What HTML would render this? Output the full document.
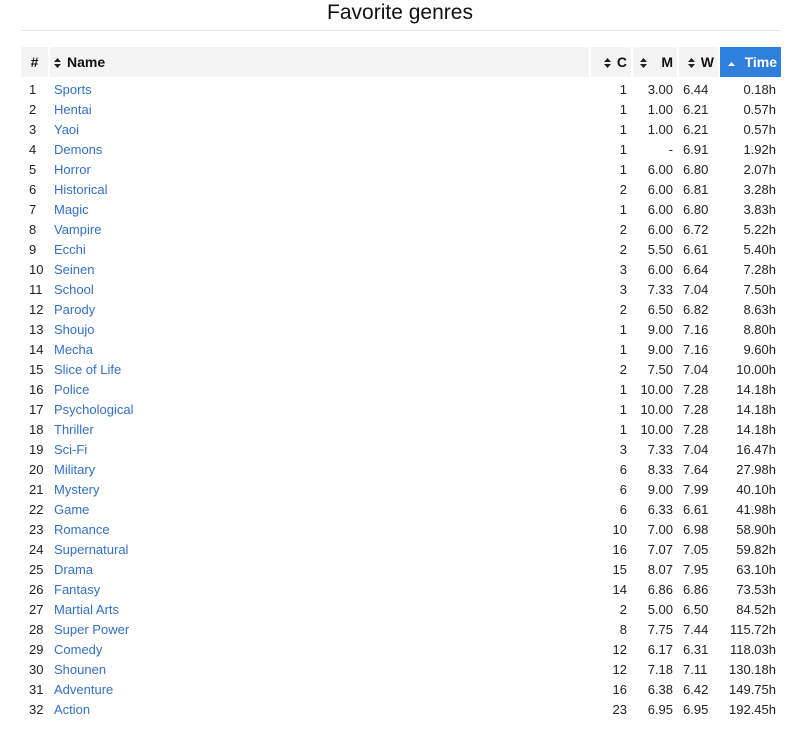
<!DOCTYPE html>
<html><head><meta charset="utf-8"><style>
body{margin:0;background:#fff;font-family:"Liberation Sans",sans-serif;color:#222;}
h1{position:absolute;top:0;left:0;width:800px;margin:0;text-align:center;font-weight:normal;font-size:21px;line-height:26px;color:#111}
.hr{position:absolute;top:30px;left:21px;width:760px;height:1px;background:#e8e8e8}
table{position:absolute;top:47px;left:21px;border-collapse:collapse;table-layout:fixed;width:760px;font-size:13px}
th{background:#f4f4f4;height:30px;padding:0 4px;font-weight:bold;font-size:14px;color:#111;border-left:2px solid #fff;white-space:nowrap}
th:first-child{border-left:0}
th.s{background:#2f80dd;color:#fff}
svg.a{vertical-align:-1px;margin-right:6px}
td{height:20px;padding:0 5px;white-space:nowrap}
td:nth-child(1){padding-left:8px}
td:nth-child(2){color:#3470c8}
td.r{text-align:right}
tr:first-child td{padding-top:2px}
</style></head><body>
<h1>Favorite genres</h1><div class="hr"></div>
<table>
<colgroup><col style="width:28px"><col style="width:541px"><col style="width:42px"><col style="width:46px"><col style="width:41px"><col style="width:62px"></colgroup>
<thead><tr><th style="text-align:center">#</th><th style="text-align:left"><svg class="a" width="7" height="10"><path d="M0 4L3.5 0 7 4Z M0 6L3.5 10 7 6Z" fill="#222"/></svg>Name</th><th style="text-align:right"><svg class="a" width="7" height="10"><path d="M0 4L3.5 0 7 4Z M0 6L3.5 10 7 6Z" fill="#222"/></svg>C</th><th style="text-align:right"><svg class="a" style="margin-right:14px" width="7" height="10"><path d="M0 4L3.5 0 7 4Z M0 6L3.5 10 7 6Z" fill="#222"/></svg>M</th><th style="text-align:right"><svg class="a" width="7" height="10"><path d="M0 4L3.5 0 7 4Z M0 6L3.5 10 7 6Z" fill="#222"/></svg>W</th><th class="s" style="text-align:right"><svg class="a" style="margin-right:10px;vertical-align:1px" width="7" height="4"><path d="M0 4L3.5 0 7 4Z" fill="#fff"/></svg>Time</th></tr></thead>
<tbody>
<tr><td>1</td><td>Sports</td><td class="r">1</td><td class="r">3.00</td><td>6.44</td><td class="r">0.18h</td></tr>
<tr><td>2</td><td>Hentai</td><td class="r">1</td><td class="r">1.00</td><td>6.21</td><td class="r">0.57h</td></tr>
<tr><td>3</td><td>Yaoi</td><td class="r">1</td><td class="r">1.00</td><td>6.21</td><td class="r">0.57h</td></tr>
<tr><td>4</td><td>Demons</td><td class="r">1</td><td class="r">-</td><td>6.91</td><td class="r">1.92h</td></tr>
<tr><td>5</td><td>Horror</td><td class="r">1</td><td class="r">6.00</td><td>6.80</td><td class="r">2.07h</td></tr>
<tr><td>6</td><td>Historical</td><td class="r">2</td><td class="r">6.00</td><td>6.81</td><td class="r">3.28h</td></tr>
<tr><td>7</td><td>Magic</td><td class="r">1</td><td class="r">6.00</td><td>6.80</td><td class="r">3.83h</td></tr>
<tr><td>8</td><td>Vampire</td><td class="r">2</td><td class="r">6.00</td><td>6.72</td><td class="r">5.22h</td></tr>
<tr><td>9</td><td>Ecchi</td><td class="r">2</td><td class="r">5.50</td><td>6.61</td><td class="r">5.40h</td></tr>
<tr><td>10</td><td>Seinen</td><td class="r">3</td><td class="r">6.00</td><td>6.64</td><td class="r">7.28h</td></tr>
<tr><td>11</td><td>School</td><td class="r">3</td><td class="r">7.33</td><td>7.04</td><td class="r">7.50h</td></tr>
<tr><td>12</td><td>Parody</td><td class="r">2</td><td class="r">6.50</td><td>6.82</td><td class="r">8.63h</td></tr>
<tr><td>13</td><td>Shoujo</td><td class="r">1</td><td class="r">9.00</td><td>7.16</td><td class="r">8.80h</td></tr>
<tr><td>14</td><td>Mecha</td><td class="r">1</td><td class="r">9.00</td><td>7.16</td><td class="r">9.60h</td></tr>
<tr><td>15</td><td>Slice of Life</td><td class="r">2</td><td class="r">7.50</td><td>7.04</td><td class="r">10.00h</td></tr>
<tr><td>16</td><td>Police</td><td class="r">1</td><td class="r">10.00</td><td>7.28</td><td class="r">14.18h</td></tr>
<tr><td>17</td><td>Psychological</td><td class="r">1</td><td class="r">10.00</td><td>7.28</td><td class="r">14.18h</td></tr>
<tr><td>18</td><td>Thriller</td><td class="r">1</td><td class="r">10.00</td><td>7.28</td><td class="r">14.18h</td></tr>
<tr><td>19</td><td>Sci-Fi</td><td class="r">3</td><td class="r">7.33</td><td>7.04</td><td class="r">16.47h</td></tr>
<tr><td>20</td><td>Military</td><td class="r">6</td><td class="r">8.33</td><td>7.64</td><td class="r">27.98h</td></tr>
<tr><td>21</td><td>Mystery</td><td class="r">6</td><td class="r">9.00</td><td>7.99</td><td class="r">40.10h</td></tr>
<tr><td>22</td><td>Game</td><td class="r">6</td><td class="r">6.33</td><td>6.61</td><td class="r">41.98h</td></tr>
<tr><td>23</td><td>Romance</td><td class="r">10</td><td class="r">7.00</td><td>6.98</td><td class="r">58.90h</td></tr>
<tr><td>24</td><td>Supernatural</td><td class="r">16</td><td class="r">7.07</td><td>7.05</td><td class="r">59.82h</td></tr>
<tr><td>25</td><td>Drama</td><td class="r">15</td><td class="r">8.07</td><td>7.95</td><td class="r">63.10h</td></tr>
<tr><td>26</td><td>Fantasy</td><td class="r">14</td><td class="r">6.86</td><td>6.86</td><td class="r">73.53h</td></tr>
<tr><td>27</td><td>Martial Arts</td><td class="r">2</td><td class="r">5.00</td><td>6.50</td><td class="r">84.52h</td></tr>
<tr><td>28</td><td>Super Power</td><td class="r">8</td><td class="r">7.75</td><td>7.44</td><td class="r">115.72h</td></tr>
<tr><td>29</td><td>Comedy</td><td class="r">12</td><td class="r">6.17</td><td>6.31</td><td class="r">118.03h</td></tr>
<tr><td>30</td><td>Shounen</td><td class="r">12</td><td class="r">7.18</td><td>7.11</td><td class="r">130.18h</td></tr>
<tr><td>31</td><td>Adventure</td><td class="r">16</td><td class="r">6.38</td><td>6.42</td><td class="r">149.75h</td></tr>
<tr><td>32</td><td>Action</td><td class="r">23</td><td class="r">6.95</td><td>6.95</td><td class="r">192.45h</td></tr>
</tbody></table>
</body></html>
